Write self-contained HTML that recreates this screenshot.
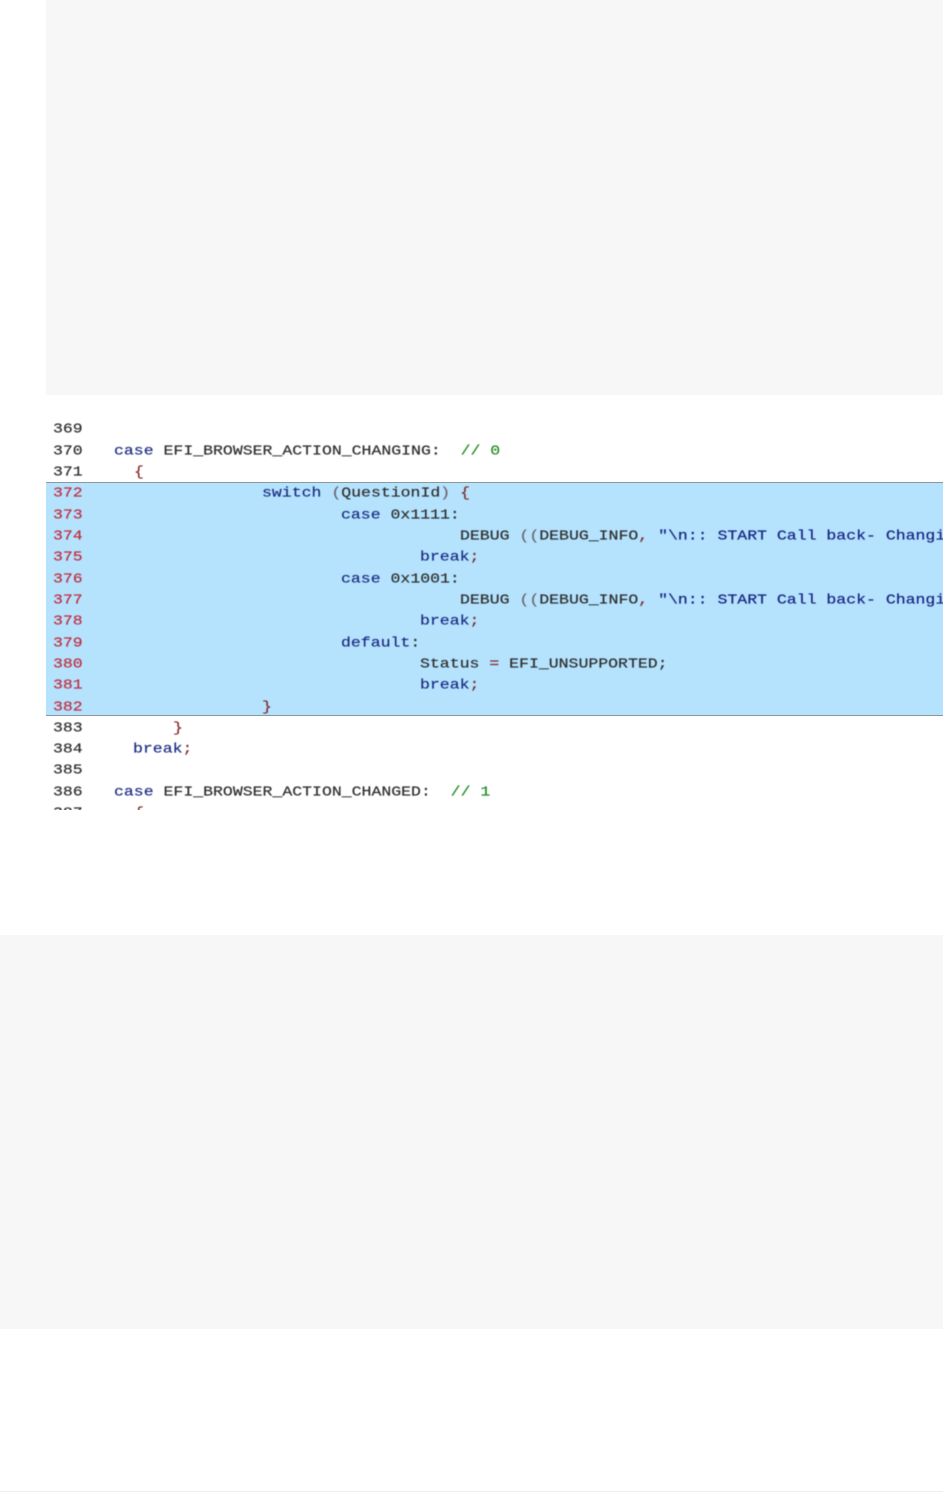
<!DOCTYPE html>
<html><head><meta charset="utf-8">
<style>
html,body{margin:0;padding:0;background:#fff;}
body{position:relative;width:943px;height:1492px;overflow:hidden;}
.g{position:absolute;background:#f7f7f7;}
#shot{position:absolute;left:46px;top:395px;width:897px;height:415px;overflow:hidden;background:#fff;}
#hl{position:absolute;left:0;top:87px;width:897px;height:234px;background:#b5e3fe;border-top:1px solid #8c979e;border-bottom:1px solid #8c979e;box-sizing:border-box;}
#txt{position:absolute;left:0;top:1px;width:897px;height:415px;filter:blur(.4px);}
.l{position:absolute;white-space:pre;font:16.5px/20px "Liberation Mono",monospace;color:#2a2a2a;-webkit-text-stroke:.2px currentColor;transform:scaleY(.84);transform-origin:50% 50%;}
.n{left:7px;color:#2a2a2a;}
.r{color:#c02c3c;}
.k{color:#1a2a80;}
.d{color:#2c2c2c;}
.b{color:#7d2a2a;}
.p{color:#6d6068;}
.c{color:#1f8a1f;}
.s{color:#14207f;}
</style></head><body>
<div class="g" style="left:46px;top:0;width:897px;height:395px"></div>
<div id="shot">
<div id="hl"></div>
<div id="txt">
<div class="l n" style="top:23px">369</div>
<div class="l n" style="top:45px">370</div><div class="l" style="left:68px;top:45px"><span class="k">case</span> <span class="d">EFI_BROWSER_ACTION_CHANGING:</span>  <span class="c">// 0</span></div>
<div class="l n" style="top:66px">371</div><div class="l b" style="left:88px;top:66px">{</div>
<div class="l n r" style="top:87px">372</div><div class="l" style="left:216px;top:87px"><span class="k">switch</span> <span class="p">(</span><span class="d">QuestionId</span><span class="p">)</span> <span class="b">{</span></div>
<div class="l n r" style="top:109px">373</div><div class="l" style="left:295px;top:109px"><span class="k">case</span> <span class="d">0x1111:</span></div>
<div class="l n r" style="top:130px">374</div><div class="l" style="left:414px;top:130px"><span class="d">DEBUG</span> <span class="p">((</span><span class="d">DEBUG_INFO</span><span class="b">,</span> <span class="s">"\n:: START Call back- Changing</span></div>
<div class="l n r" style="top:151px">375</div><div class="l k" style="left:374px;top:151px">break<span class="b">;</span></div>
<div class="l n r" style="top:173px">376</div><div class="l" style="left:295px;top:173px"><span class="k">case</span> <span class="d">0x1001:</span></div>
<div class="l n r" style="top:194px">377</div><div class="l" style="left:414px;top:194px"><span class="d">DEBUG</span> <span class="p">((</span><span class="d">DEBUG_INFO</span><span class="b">,</span> <span class="s">"\n:: START Call back- Changing</span></div>
<div class="l n r" style="top:215px">378</div><div class="l k" style="left:374px;top:215px">break<span class="b">;</span></div>
<div class="l n r" style="top:237px">379</div><div class="l k" style="left:295px;top:237px">default<span class="d">:</span></div>
<div class="l n r" style="top:258px">380</div><div class="l" style="left:374px;top:258px"><span class="d">Status</span> <span class="b">=</span> <span class="d">EFI_UNSUPPORTED;</span></div>
<div class="l n r" style="top:279px">381</div><div class="l k" style="left:374px;top:279px">break<span class="b">;</span></div>
<div class="l n r" style="top:301px">382</div><div class="l b" style="left:216px;top:301px">}</div>
<div class="l n" style="top:322px">383</div><div class="l b" style="left:127px;top:322px">}</div>
<div class="l n" style="top:343px">384</div><div class="l k" style="left:87px;top:343px">break<span class="b">;</span></div>
<div class="l n" style="top:364px">385</div>
<div class="l n" style="top:386px">386</div><div class="l" style="left:68px;top:386px"><span class="k">case</span> <span class="d">EFI_BROWSER_ACTION_CHANGED:</span>  <span class="c">// 1</span></div>
<div class="l n" style="top:407px">387</div><div class="l b" style="left:88px;top:407px">{</div>
</div>
</div>
<div class="g" style="left:0;top:935px;width:943px;height:394px"></div>
<div style="position:absolute;left:0;top:1491px;width:943px;height:1px;background:#eee"></div>
</body></html>
